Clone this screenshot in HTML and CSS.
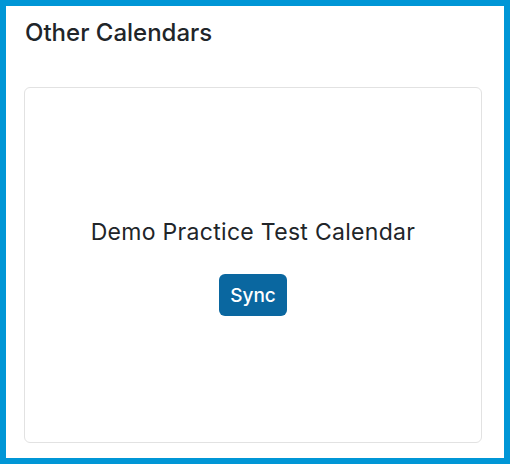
FILE: index.html
```html
<!DOCTYPE html>
<html>
<head>
<meta charset="utf-8">
<link rel="stylesheet" href="styles.css">
</head>
<body>
<div class="frame">
  <h2 class="title">Other Calendars</h2>
  <div class="card">
    <div class="cal-name">Demo Practice Test Calendar</div>
    <button class="sync">Sync</button>
  </div>
</div>
</body>
</html>
```

FILE: styles.css
```css
html, body {
  margin: 0;
  padding: 0;
  background: #ffffff;
}
body {
  font-family: Inter, "Noto Sans", sans-serif;
  color: #212529;
}
.frame {
  box-sizing: border-box;
  width: 510px;
  height: 464px;
  border: 6px solid #0096d6;
  padding: 13px 22px 15px 18px;
  display: flex;
  flex-direction: column;
}
.title {
  margin: 0 0 0 1px;
  font-size: 24px;
  font-weight: 500;
  line-height: 28px;
  color: #212529;
}
.card {
  margin-top: 40px;
  padding-top: 4px;
  flex: 1;
  border: 1px solid #e2e2e2;
  border-radius: 6px;
  display: flex;
  flex-direction: column;
  align-items: center;
  justify-content: center;
  gap: 28px;
}
.cal-name {
  font-size: 23px;
  letter-spacing: 0.3px;
  line-height: 28px;
  color: #212529;
}
.sync {
  font-family: Inter, "Noto Sans", sans-serif;
  font-size: 19px;
  font-weight: 500;
  color: #ffffff;
  background: #0a67a0;
  border: none;
  border-radius: 6px;
  height: 42px;
  padding: 0 11px;
  cursor: pointer;
}
```
